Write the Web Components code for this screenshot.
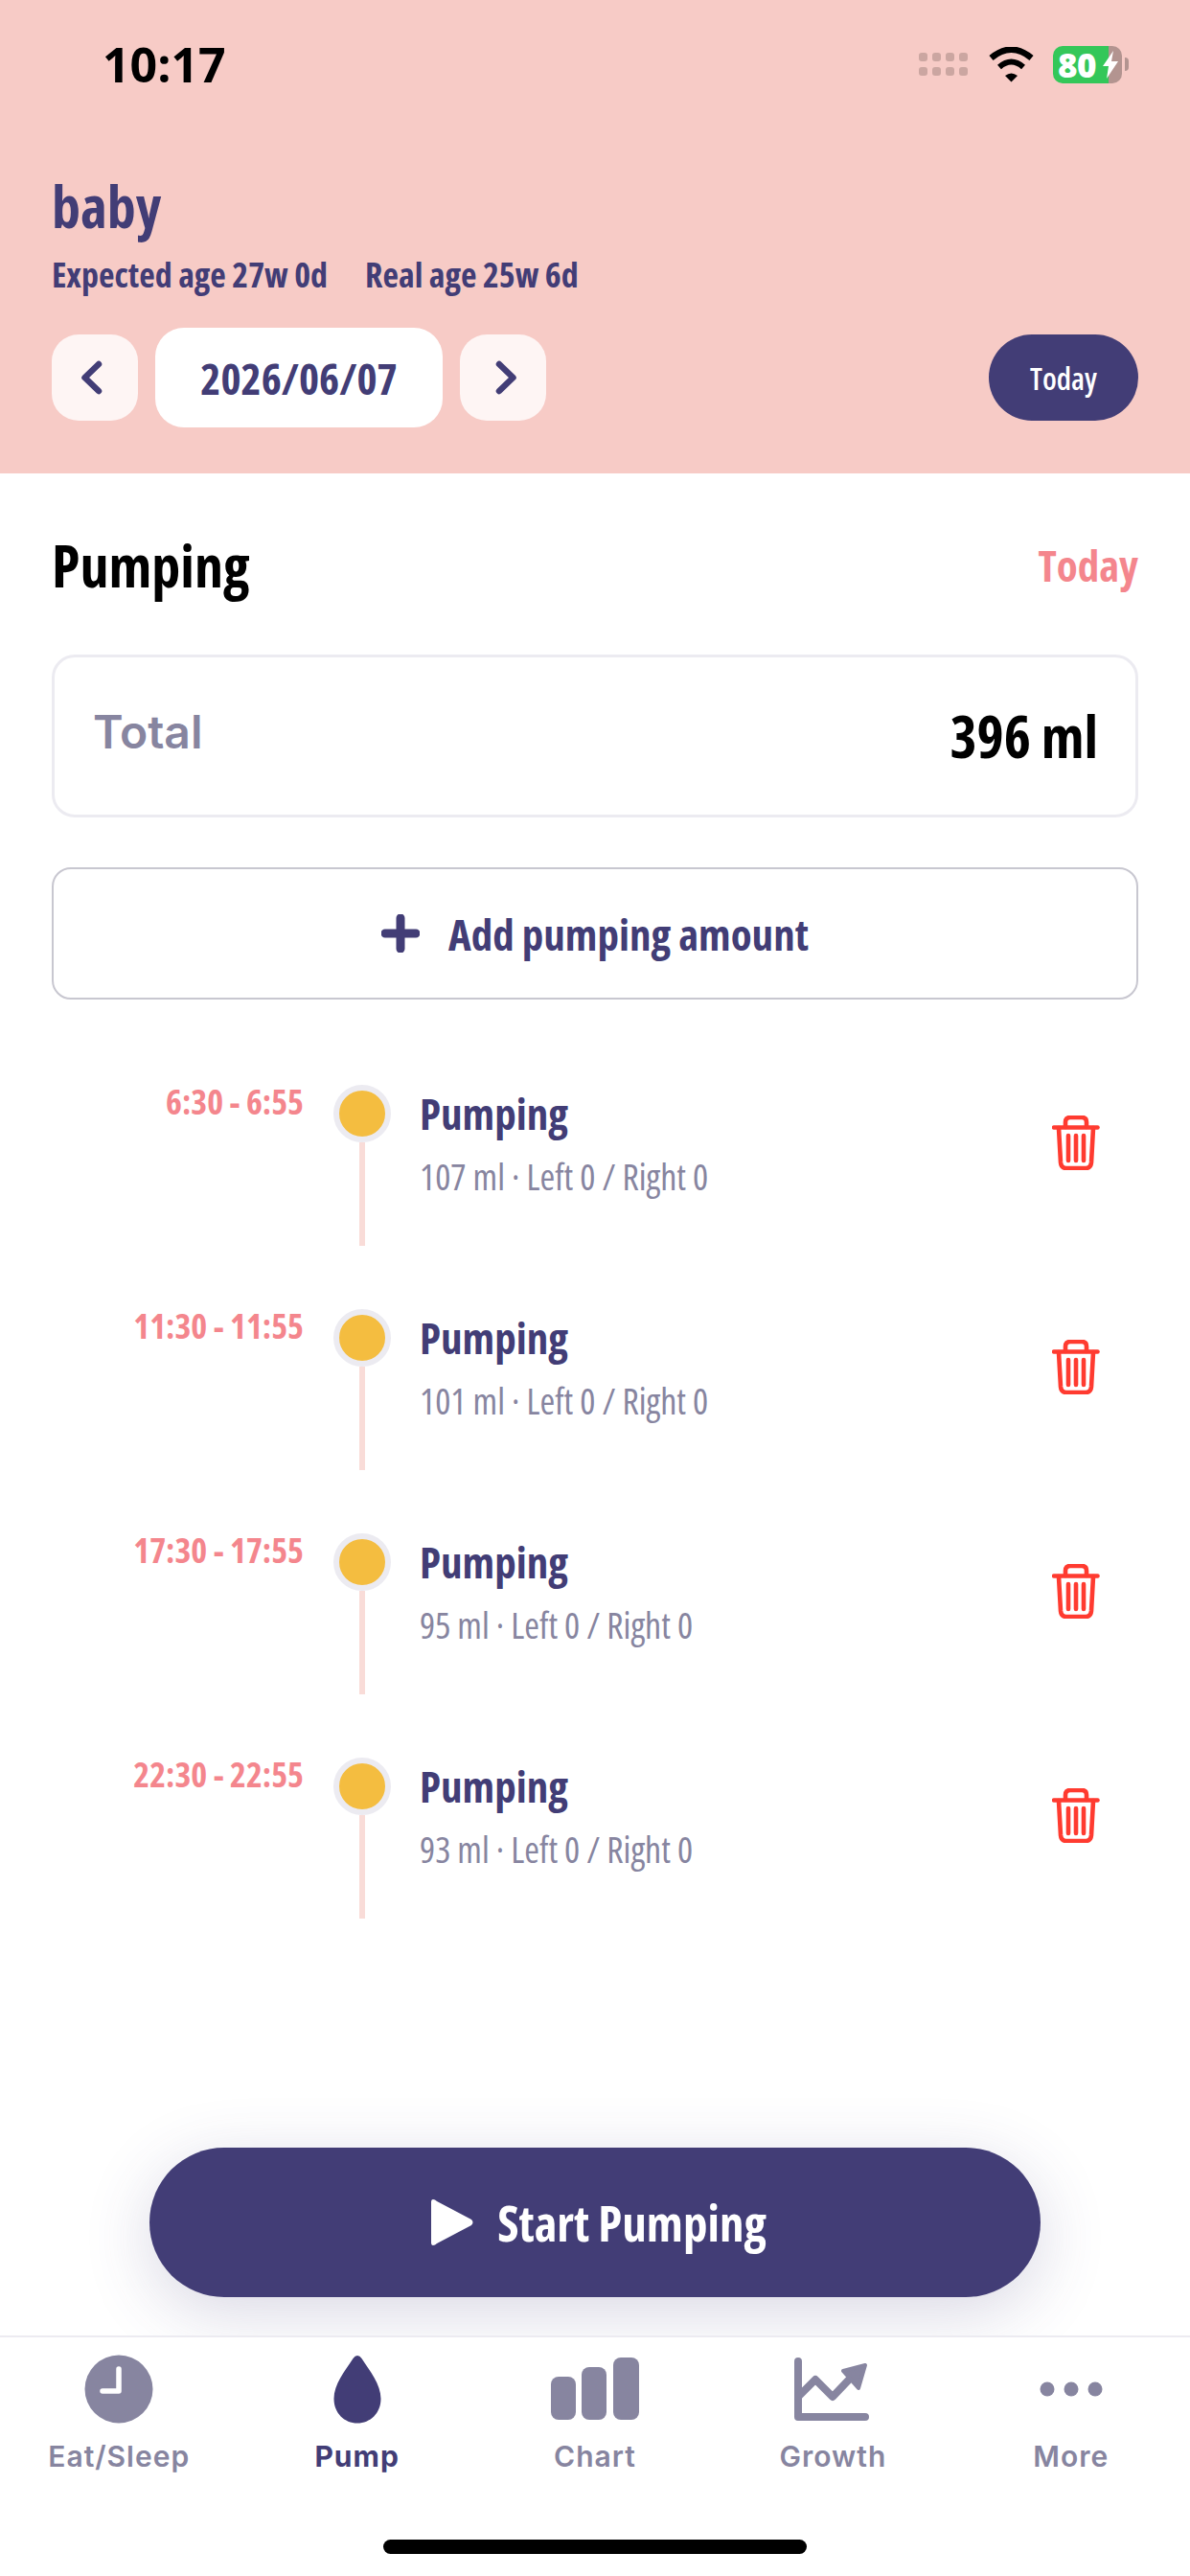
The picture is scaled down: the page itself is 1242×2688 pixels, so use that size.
<!DOCTYPE html>
<html>
<head>
<meta charset="utf-8">
<title>Pump</title>
<style>
    html, body {
        margin: 0;
        padding: 0;
        background: #fff;
    }
    body {
        font-family: "Open Sans", "Noto Sans", sans-serif;
        font-stretch: 75%;
    }
</style>
</head>
<body>
<pump-page>
    <status-bar slot="status" time="10:17" battery="80"></status-bar>
    <baby-header slot="header" name="baby" expected="Expected age 27w 0d" real="Real age 25w 6d" date="2026/06/07"></baby-header>
    <section-title>Pumping</section-title>
    <total-card label="Total" value="396 ml"></total-card>
    <add-button>Add pumping amount</add-button>
    <pump-entry time="6:30 - 6:55" detail="107 ml · Left 0 / Right 0"></pump-entry>
    <pump-entry time="11:30 - 11:55" detail="101 ml · Left 0 / Right 0"></pump-entry>
    <pump-entry time="17:30 - 17:55" detail="95 ml · Left 0 / Right 0"></pump-entry>
    <pump-entry time="22:30 - 22:55" detail="93 ml · Left 0 / Right 0"></pump-entry>
    <start-button slot="action">Start Pumping</start-button>
    <tab-bar slot="tabs"></tab-bar>
</pump-page>

<script>
const CONDENSED = `"Open Sans", "Noto Sans", sans-serif`;
const NAVY = '#423d76';
const GREY = '#8785a0';
const PINK = '#f4868d';

class PumpPage extends HTMLElement {
    constructor() {
        super();
        this.shadowDOM = this.attachShadow({ mode: 'open' });
        this.shadowDOM.innerHTML = `
        <style>
        :host {
            display: flex;
            flex-direction: column;
            height: 2688px;
            overflow: hidden;
            background: #fff;
        }
        .top {
            background: #f7cbc6;
            height: 494px;
            flex: none;
        }
        .content {
            flex: 1;
            display: flex;
            flex-direction: column;
            padding: 0 54px;
        }
        .action {
            flex: none;
            display: flex;
            justify-content: center;
            padding-bottom: 40px;
        }
        </style>
        <div class="top">
            <slot name="status"></slot>
            <slot name="header"></slot>
        </div>
        <div class="content"><slot></slot></div>
        <div class="action"><slot name="action"></slot></div>
        <slot name="tabs"></slot>
        `;
    }
}

class StatusBar extends HTMLElement {
    constructor() {
        super();
        this.shadowDOM = this.attachShadow({ mode: 'open' });
    }

    connectedCallback() {
        const dots = '<i></i>'.repeat(8);
        this.shadowDOM.innerHTML = `
        <style>
        :host {
            display: flex;
            align-items: center;
            height: 134px;
            padding: 0 64px 0 107px;
        }
        .time {
            font: 700 50px/1 "Open Sans", sans-serif;
            font-stretch: 100%;
            color: #000;
            flex: 1;
        }
        .dots {
            display: grid;
            grid-template-columns: repeat(4, 9px);
            gap: 6px 5px;
            margin-right: 22px;
        }
        .dots i {
            display: block;
            width: 9px;
            height: 9px;
            border-radius: 3px;
            background: #cba6a1;
        }
        svg {
            display: block;
        }
        .battery {
            position: relative;
            width: 72px;
            height: 39px;
            margin-left: 20px;
            border-radius: 10px;
            display: flex;
            align-items: center;
            background: linear-gradient(90deg, #34c759 0 58px, #b39490 58px);
            color: #fff;
            box-sizing: border-box;
            padding-left: 5px;
        }
        .level {
            font: 800 35px/39px "Open Sans", sans-serif;
            font-stretch: 100%;
            letter-spacing: -0.5px;
        }
        .battery svg {
            position: absolute;
            left: 52px;
            top: 5px;
        }
        .nub {
            width: 4px;
            height: 14px;
            margin-left: 3px;
            border-radius: 0 7px 7px 0;
            background: #b39490;
        }
        </style>
        <div class="time">${this.getAttribute('time')}</div>
        <div class="dots">${dots}</div>
        <svg width="47" height="37" viewBox="0 0 47 37">
            <path d="M2.5 11.5Q23.5 -6 44.5 11.5" fill="none" stroke="#000" stroke-width="6.5"/>
            <path d="M11 21Q23.5 10 36 21" fill="none" stroke="#000" stroke-width="6"/>
            <path d="M17 30Q23.5 25 30 30L23.5 36.5Z" fill="#000"/>
        </svg>
        <div class="battery"><span class="level">${this.getAttribute('battery')}</span>
            <svg width="16" height="29" viewBox="0 0 16 29"><path d="M11 0L0 16H6L4 29L16 11H9Z" fill="#fff"/></svg>
        </div>
        <div class="nub"></div>
        `;
    }
}

class BabyHeader extends HTMLElement {
    constructor() {
        super();
        this.shadowDOM = this.attachShadow({ mode: 'open' });
    }

    connectedCallback() {
        this.shadowDOM.innerHTML = `
        <style>
        :host {
            display: block;
            padding: 40px 54px 0;
            color: ${NAVY};
            font-family: ${CONDENSED};
            font-stretch: 75%;
        }
        .name {
            font-size: 60px;
            font-weight: 700;
            line-height: 82px;
        }
        .ages {
            display: flex;
            gap: 39px;
            font-size: 36px;
            font-weight: 700;
            line-height: 46px;
            margin-top: 8px;
        }
        .nav {
            display: flex;
            align-items: center;
            margin-top: 32px;
        }
        .arrow {
            width: 90px;
            height: 90px;
            border-radius: 28px;
            background: #fef5f4;
            display: flex;
            align-items: center;
            justify-content: center;
        }
        .arrow.back svg {
            margin-right: 6px;
        }
        .arrow.next svg {
            margin-left: 6px;
        }
        .date {
            width: 300px;
            height: 104px;
            margin: 0 18px;
            border-radius: 30px;
            background: #fff;
            display: flex;
            align-items: center;
            justify-content: center;
            font-size: 45px;
            font-weight: 700;
        }
        .today {
            margin-left: auto;
            width: 156px;
            height: 90px;
            border-radius: 45px;
            background: ${NAVY};
            color: #fff;
            display: flex;
            align-items: center;
            justify-content: center;
            font-size: 32px;
            font-weight: 600;
        }
        </style>
        <div class="name">${this.getAttribute('name')}</div>
        <div class="ages"><span>${this.getAttribute('expected')}</span><span>${this.getAttribute('real')}</span></div>
        <div class="nav">
            <div class="arrow back">
                <svg width="26" height="38" viewBox="0 0 26 38"><path d="M20 5L5.5 19L20 33" fill="none" stroke="${NAVY}" stroke-width="6.5" stroke-linecap="round" stroke-linejoin="round"/></svg>
            </div>
            <div class="date">${this.getAttribute('date')}</div>
            <div class="arrow next">
                <svg width="26" height="38" viewBox="0 0 26 38"><path d="M6 5L20.5 19L6 33" fill="none" stroke="${NAVY}" stroke-width="6.5" stroke-linecap="round" stroke-linejoin="round"/></svg>
            </div>
            <div class="today">Today</div>
        </div>
        `;
    }
}

class SectionTitle extends HTMLElement {
    constructor() {
        super();
        this.shadowDOM = this.attachShadow({ mode: 'open' });
        this.shadowDOM.innerHTML = `
        <style>
        :host {
            display: flex;
            justify-content: space-between;
            align-items: center;
            height: 80px;
            margin-top: 56px;
            font-family: ${CONDENSED};
            font-stretch: 75%;
        }
        .title {
            font-size: 60px;
            font-weight: 700;
            color: #000;
        }
        .side {
            font-size: 45px;
            font-weight: 700;
            color: ${PINK};
            margin-top: -2px;
        }
        </style>
        <span class="title"><slot></slot></span>
        <span class="side">Today</span>
        `;
    }
}

class TotalCard extends HTMLElement {
    constructor() {
        super();
        this.shadowDOM = this.attachShadow({ mode: 'open' });
    }

    connectedCallback() {
        this.shadowDOM.innerHTML = `
        <style>
        :host {
            display: flex;
            justify-content: space-between;
            align-items: center;
            box-sizing: border-box;
            height: 170px;
            margin-top: 53px;
            padding: 0 39px 0 40px;
            border: 3px solid #ecebf1;
            border-radius: 24px;
        }
        .label {
            font: 600 48px/1 Inter, sans-serif;
            font-stretch: 100%;
            color: ${GREY};
            margin-top: -8px;
        }
        .value {
            font-family: ${CONDENSED};
            font-stretch: 75%;
            font-size: 60px;
            font-weight: 700;
            color: #000;
        }
        </style>
        <span class="label">${this.getAttribute('label')}</span>
        <span class="value">${this.getAttribute('value')}</span>
        `;
    }
}

class AddButton extends HTMLElement {
    constructor() {
        super();
        this.shadowDOM = this.attachShadow({ mode: 'open' });
        this.shadowDOM.innerHTML = `
        <style>
        :host {
            display: flex;
            justify-content: center;
            align-items: center;
            gap: 30px;
            box-sizing: border-box;
            height: 138px;
            margin-top: 52px;
            margin-bottom: 89px;
            border: 2px solid #c8c7d0;
            border-radius: 20px;
            color: ${NAVY};
            font-family: ${CONDENSED};
            font-stretch: 75%;
            font-size: 45px;
            font-weight: 700;
        }
        </style>
        <svg width="40" height="40" viewBox="0 0 40 40"><path d="M20 4V36M4 20H36" stroke="${NAVY}" stroke-width="9" stroke-linecap="round"/></svg>
        <span><slot></slot></span>
        `;
    }
}

class PumpEntry extends HTMLElement {
    constructor() {
        super();
        this.shadowDOM = this.attachShadow({ mode: 'open' });
    }

    connectedCallback() {
        this.shadowDOM.innerHTML = `
        <style>
        :host {
            display: grid;
            grid-template-columns: 263px 93px 1fr 50px;
            height: 234px;
            margin-right: 40px;
            font-family: ${CONDENSED};
            font-stretch: 75%;
        }
        .time {
            text-align: right;
            font-size: 36px;
            font-weight: 700;
            line-height: 46px;
            color: ${PINK};
            margin-top: -5px;
        }
        .rail {
            display: flex;
            flex-direction: column;
            align-items: center;
            width: 60px;
            margin-left: 31px;
        }
        .dot {
            box-sizing: border-box;
            width: 60px;
            height: 60px;
            flex: none;
            border-radius: 50%;
            border: 6px solid #ecebf1;
            background: #f4bd40;
        }
        .line {
            width: 6px;
            height: 108px;
            background: #f9dcd8;
        }
        .text {
            padding-left: 28px;
        }
        .name {
            font-size: 45px;
            font-weight: 700;
            line-height: 60px;
            color: ${NAVY};
        }
        .detail {
            font-size: 38px;
            font-weight: 500;
            line-height: 48px;
            margin-top: 11px;
            color: ${GREY};
        }
        svg {
            display: block;
            margin-top: 32px;
        }
        </style>
        <div class="time">${this.getAttribute('time')}</div>
        <div class="rail"><div class="dot"></div><div class="line"></div></div>
        <div class="text">
            <div class="name">Pumping</div>
            <div class="detail">${this.getAttribute('detail')}</div>
        </div>
        <svg width="50" height="57" viewBox="0 0 50 57" fill="none" stroke="#ff3b30" stroke-width="4.6" stroke-linecap="round" stroke-linejoin="round">
            <path d="M2 12.5H47.5"/>
            <path d="M14 12V7Q14 2 19 2H31Q36 2 36 7V12"/>
            <path d="M7 13L9 49Q9.5 55 15 55H35Q40.5 55 41 49L43 13"/>
            <path d="M17 21V47M25 21V47M33 21V47"/>
        </svg>
        `;
    }
}

class StartButton extends HTMLElement {
    constructor() {
        super();
        this.shadowDOM = this.attachShadow({ mode: 'open' });
        this.shadowDOM.innerHTML = `
        <style>
        :host {
            display: flex;
            justify-content: center;
            align-items: center;
            gap: 24px;
            box-sizing: border-box;
            width: 930px;
            height: 156px;
            padding-left: 7px;
            border-radius: 78px;
            background: ${NAVY};
            box-shadow: 0 16px 70px rgba(66, 61, 118, 0.2);
            color: #fff;
            font-family: ${CONDENSED};
            font-stretch: 75%;
            font-size: 51px;
            font-weight: 700;
        }
        </style>
        <svg width="46" height="50" viewBox="0 0 46 50"><path d="M3 1Q1 1 1 4V46Q1 49 3 49Q5 49 7 47L43 28Q46 25 43 22L7 3Q5 1 3 1Z" fill="#fff"/></svg>
        <span><slot></slot></span>
        `;
    }
}

class TabBar extends HTMLElement {
    constructor() {
        super();
        this.shadowDOM = this.attachShadow({ mode: 'open' });
    }

    connectedCallback() {
        const tabs = [
            ['Eat/Sleep', `<svg width="72" height="72" viewBox="0 0 72 72"><circle cx="36" cy="36" r="35.5" fill="${GREY}"/><path d="M36 15V38H19" fill="none" stroke="#fff" stroke-width="5.5" stroke-linecap="round" stroke-linejoin="round"/></svg>`],
            ['Pump', `<svg width="50" height="72" viewBox="0 0 50 72"><path d="M25 1Q27.5 1 29.5 4C38 17 49.5 31 49.5 46C49.5 61 38.5 71.5 25 71.5C11.5 71.5 0.5 61 0.5 46C0.5 31 12 17 20.5 4Q22.5 1 25 1Z" fill="${NAVY}"/></svg>`, true],
            ['Chart', `<svg width="92" height="66" viewBox="0 0 92 66" fill="${GREY}"><rect x="0" y="20" width="26" height="45" rx="8"/><rect x="32" y="10" width="26" height="55" rx="8"/><rect x="65" y="0" width="27" height="65" rx="8"/></svg>`],
            ['Growth', `<svg width="80" height="67" viewBox="0 0 80 67" fill="none" stroke="${GREY}" stroke-width="8" stroke-linecap="round" stroke-linejoin="round"><path d="M4 4V62H74"/><path d="M4 41L22 23L40 41L60 20"/><path d="M74 8L51 14L67 32Z" fill="${GREY}" stroke-width="4"/></svg>`],
            ['More', `<svg width="66" height="16" viewBox="0 0 66 16" fill="${GREY}"><circle cx="8" cy="8" r="7.5"/><circle cx="33" cy="8" r="7.5"/><circle cx="58" cy="8" r="7.5"/></svg>`]
        ];
        this.shadowDOM.innerHTML = `
        <style>
        :host {
            display: block;
            flex: none;
            position: relative;
            height: 249px;
            border-top: 2px solid #ecebf1;
            background: #fff;
        }
        .tabs {
            display: grid;
            grid-template-columns: repeat(5, 1fr);
        }
        .tab {
            display: flex;
            flex-direction: column;
            align-items: center;
            color: ${GREY};
            font: 600 30px/36px Inter, sans-serif;
            font-stretch: 100%;
            letter-spacing: 1px;
        }
        .tab.active {
            color: ${NAVY};
            font-weight: 700;
        }
        .icon {
            height: 72px;
            margin-top: 18px;
            margin-bottom: 16px;
            display: flex;
            align-items: center;
        }
        .home {
            position: absolute;
            left: 400px;
            bottom: 23px;
            width: 442px;
            height: 15px;
            border-radius: 8px;
            background: #000;
        }
        </style>
        <div class="tabs">
            ${tabs.map(t => `<div class="tab${t[2] ? ' active' : ''}"><div class="icon">${t[1]}</div><span>${t[0]}</span></div>`).join('')}
        </div>
        <div class="home"></div>
        `;
    }
}

customElements.define('pump-page', PumpPage);
customElements.define('status-bar', StatusBar);
customElements.define('baby-header', BabyHeader);
customElements.define('section-title', SectionTitle);
customElements.define('total-card', TotalCard);
customElements.define('add-button', AddButton);
customElements.define('pump-entry', PumpEntry);
customElements.define('start-button', StartButton);
customElements.define('tab-bar', TabBar);
</script>
</body>
</html>
